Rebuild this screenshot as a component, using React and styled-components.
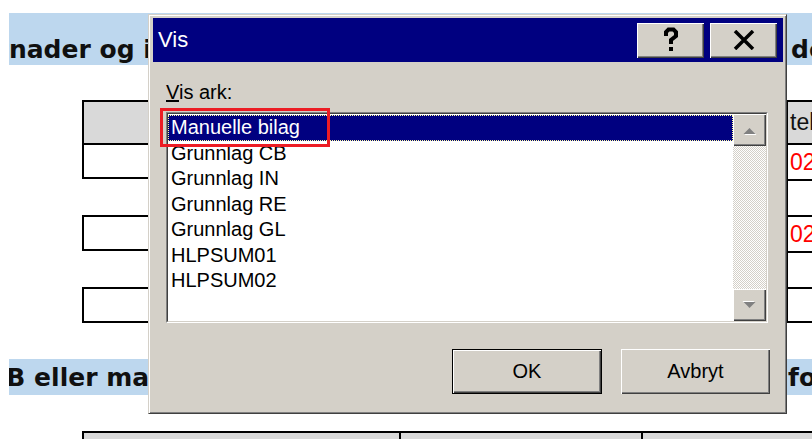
import React from 'react'
import styled, { createGlobalStyle } from 'styled-components'

const GlobalStyle = createGlobalStyle`
  html, body {
    margin: 0;
    padding: 0;
    background: #fff;
  }
  body {
    font-family: "Liberation Sans", Arial, sans-serif;
    overflow: hidden;
  }
`

const Page = styled.div`
  position: relative;
  width: 812px;
  height: 439px;
  overflow: hidden;
  padding-top: 13px;
  box-sizing: border-box;
  display: flex;
  flex-direction: column;
`

/* worksheet behind the dialog */

const Band = styled.div`
  flex-shrink: 0;
  margin-left: 9px;
  margin-top: ${props => props.$gap}px;
  height: ${props => props.$height}px;
  padding-bottom: ${props => props.$lift}px;
  box-sizing: border-box;
  display: grid;
  grid-template-columns: 141px 636px 1fr;
  align-items: end;
  background: #bdd7ee;
  font-family: "DejaVu Sans", Verdana, sans-serif;
  font-weight: 700;
  font-size: 25px;
  color: #101010;
  white-space: nowrap;
`

const BandText = styled.span`
  overflow: hidden;
  text-indent: ${props => props.$indent || 0}px;
  padding-left: ${props => props.$pad || 0}px;
`

const Sheet = styled.div`
  flex-shrink: 0;
  margin-left: 82px;
  margin-top: ${props => props.$gap}px;
  display: grid;
  grid-template-columns: ${props => props.$columns};
`

const Cell = styled.div`
  box-sizing: border-box;
  height: ${props => props.$h}px;
  background: ${props => (props.$head ? '#d9d9d9' : '#fff')};
  border: 0 solid #000;
  border-top-width: ${props => (props.$top ? 2 : 0)}px;
  border-left-width: ${props => (props.$left ? 2 : 0)}px;
  border-bottom-width: ${props => (props.$bottom ? 2 : 0)}px;
  display: flex;
  align-items: center;
  padding-left: 2px;
  font-size: 23px;
  color: ${props => (props.$red ? '#ff0000' : '#111')};
  white-space: nowrap;
  overflow: hidden;
`

const rows = [
  { h: 43, head: true, boxed: true, text: 'tekst' },
  { h: 36, boxed: true, text: '02.01', red: true },
  { h: 36, boxed: false },
  { h: 36, boxed: true, text: '02.01', red: true },
  { h: 36, boxed: false },
  { h: 36, boxed: true },
]

/* dialog */

const Dialog = styled.div`
  position: absolute;
  left: 148px;
  top: 14px;
  width: 639px;
  height: 400px;
  box-sizing: border-box;
  display: flex;
  flex-direction: column;
  padding: 3px 3px 19px 4px;
  background: #d4d0c8;
  border: 1px solid;
  border-color: #d4d0c8 #404040 #404040 #d4d0c8;
  box-shadow: inset 1px 1px 0 #fff, inset -1px -1px 0 #808080;
`

const TitleBar = styled.div`
  height: 44px;
  flex-shrink: 0;
  display: flex;
  align-items: center;
  padding: 0 6px 0 5px;
  background: #000080;
`

const Title = styled.span`
  color: #fff;
  font-size: 22px;
  flex: 1;
`

const Raised = styled.button`
  box-sizing: border-box;
  display: flex;
  align-items: center;
  justify-content: center;
  padding: 0;
  background: #d4d0c8;
  border: none;
  box-shadow: inset 1px 1px 0 #fff, inset -1px -1px 0 #404040,
    inset -2px -2px 0 #808080;
  font-family: "Liberation Sans", Arial, sans-serif;
  font-size: 20px;
  color: #000;
`

const CaptionButton = styled(Raised)`
  width: 67px;
  height: 35px;
  margin-left: ${props => (props.$first ? 0 : 6)}px;
`

const Body = styled.div`
  flex: 1;
  display: flex;
  flex-direction: column;
  padding: 19px 13px 0 13px;
`

const Label = styled.div`
  font-size: 20px;
  line-height: 23px;
  margin-bottom: 8px;
  color: #000;
`

const ListBox = styled.div`
  width: 602px;
  height: 211px;
  box-sizing: border-box;
  border: 1px solid;
  border-color: #808080 #fff #fff #808080;
`

const ListInner = styled.div`
  height: 100%;
  box-sizing: border-box;
  display: flex;
  border: 1px solid;
  border-color: #404040 #d4d0c8 #d4d0c8 #404040;
  background: #fff;
`

const Items = styled.div`
  flex: 1;
  padding-top: 1px;
`

const Item = styled.div`
  height: 25.5px;
  line-height: 25.5px;
  padding-left: 3px;
  font-size: 20px;
  white-space: nowrap;
  color: ${props => (props.$selected ? '#fff' : '#000')};
  background: ${props => (props.$selected ? '#000080' : 'transparent')};
  outline: ${props => (props.$selected ? '1px dotted #ffffa0' : 'none')};
  outline-offset: -1px;
`

const ScrollBar = styled.div`
  width: 33px;
  display: flex;
  flex-direction: column;
`

const ScrollButton = styled(Raised)`
  width: 33px;
  height: 32px;
  flex-shrink: 0;
`

const Track = styled.div`
  flex: 1;
  background-image: repeating-conic-gradient(#d4d0c8 0 25%, #fff 0 50%);
  background-size: 2px 2px;
`

const Footer = styled.div`
  margin-top: auto;
  display: flex;
  justify-content: flex-end;
  gap: 19px;
`

const DialogButton = styled(Raised)`
  width: ${props => props.$width}px;
  height: 45px;
  ${props =>
    props.$default &&
    `
    border: 1px solid #000;
    box-shadow: inset 1px 1px 0 #fff, inset -1px -1px 0 #404040,
      inset -2px -2px 0 #808080;
  `}
`

const Marker = styled.div`
  position: absolute;
  left: 160px;
  top: 108px;
  width: 170px;
  height: 39px;
  box-sizing: border-box;
  border: 3px solid #ec1c24;
  pointer-events: none;
`

const Arrow = ({ down }) => (
  <svg width="15" height="9" viewBox="0 0 15 9">
    <g transform={down ? 'rotate(180 7.5 4.5)' : undefined}>
      <polygon points="1.5,8 13.5,8 7.5,2" fill="#fff" transform="translate(1 1)" />
      <polygon points="1.5,8 13.5,8 7.5,2" fill="#808080" />
    </g>
  </svg>
)

const HelpGlyph = () => (
  <svg width="16" height="26" viewBox="0 0 16 26">
    <path
      d="M3 9 V5 L5.5 2.5 H10.5 L13 5 V9 L8 13 V17"
      fill="none"
      stroke="#000"
      strokeWidth="4"
      strokeLinejoin="miter"
    />
    <rect x="6" y="20" width="4" height="4" fill="#000" />
  </svg>
)

const CloseGlyph = () => (
  <svg width="22" height="20" viewBox="0 0 22 20">
    <path d="M2 1 L20 19 M20 1 L2 19" stroke="#000" strokeWidth="3.5" />
  </svg>
)

const sheets = [
  'Manuelle bilag',
  'Grunnlag CB',
  'Grunnlag IN',
  'Grunnlag RE',
  'Grunnlag GL',
  'HLPSUM01',
  'HLPSUM02',
]

export default function App() {
  return (
    <>
      <GlobalStyle />
      <Page>
        <Band $gap={0} $height={52} $lift={1}>
          <BandText $indent={-63}>Kostnader og inntekter</BandText>
          <span />
          <BandText $pad={5}>detaljer</BandText>
        </Band>

        <Sheet $gap={35} $columns="68px 636px 1fr">
          {rows.map((row, i) => {
            const last = i === rows.length - 1
            const nextBoxed = !last && rows[i + 1].boxed
            return (
              <React.Fragment key={i}>
                <Cell
                  $h={row.h}
                  $head={row.head}
                  $top={row.boxed}
                  $left={row.boxed}
                  $bottom={row.boxed && (!nextBoxed || last)}
                />
                <Cell $h={row.h} />
                <Cell
                  $h={row.h}
                  $head={row.head}
                  $red={row.red}
                  $top
                  $left
                  $bottom={last}
                >
                  {row.text}
                </Cell>
              </React.Fragment>
            )
          })}
        </Sheet>

        <Band $gap={36} $height={36} $lift={3}>
          <BandText $indent={-21}>CB eller manuelle bilag</BandText>
          <span />
          <BandText $pad={2}>fordeling</BandText>
        </Band>

        <Sheet $gap={36} $columns="317px 242px 1fr">
          <Cell $h={40} $head $top $left />
          <Cell $h={40} $head $top $left />
          <Cell $h={40} $head $top $left />
        </Sheet>

        <Dialog>
          <TitleBar>
            <Title>Vis</Title>
            <CaptionButton $first>
              <HelpGlyph />
            </CaptionButton>
            <CaptionButton>
              <CloseGlyph />
            </CaptionButton>
          </TitleBar>

          <Body>
            <Label>
              <u>V</u>is ark:
            </Label>
            <ListBox>
              <ListInner>
                <Items>
                  {sheets.map((name, i) => (
                    <Item key={name} $selected={i === 0}>
                      {name}
                    </Item>
                  ))}
                </Items>
                <ScrollBar>
                  <ScrollButton>
                    <Arrow />
                  </ScrollButton>
                  <Track />
                  <ScrollButton>
                    <Arrow down />
                  </ScrollButton>
                </ScrollBar>
              </ListInner>
            </ListBox>

            <Footer>
              <DialogButton $width={150} $default>
                OK
              </DialogButton>
              <DialogButton $width={149}>Avbryt</DialogButton>
            </Footer>
          </Body>
        </Dialog>

        <Marker />
      </Page>
    </>
  )
}
